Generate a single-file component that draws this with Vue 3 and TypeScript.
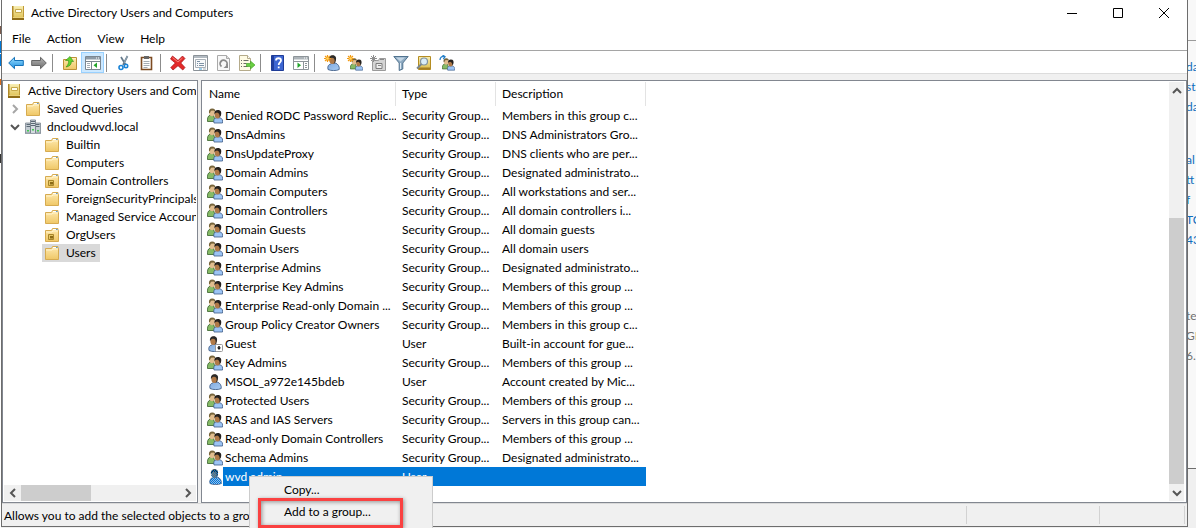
<script setup lang="ts">
import { ref } from 'vue'

interface Tool { id: string; label: string; active?: boolean }
interface TreeNode { label: string; icon: string; depth: number; state?: 'open' | 'closed' }
interface Row { name: string; icon: string; type: string; desc: string }

const menus = ['File', 'Action', 'View', 'Help']

const toolGroups: Tool[][] = [
  [{ id: 'back', label: 'Back' }, { id: 'forward', label: 'Forward' }],
  [{ id: 'up', label: 'Up one level' }, { id: 'tree', label: 'Show/Hide console tree', active: true }],
  [{ id: 'cut', label: 'Cut' }, { id: 'paste', label: 'Paste' }],
  [
    { id: 'delete', label: 'Delete' },
    { id: 'props', label: 'Properties' },
    { id: 'refresh', label: 'Refresh' },
    { id: 'export', label: 'Export list' },
  ],
  [{ id: 'help', label: 'Help' }, { id: 'action', label: 'Show/Hide action pane' }],
  [
    { id: 'newuser', label: 'Create a new user' },
    { id: 'newgroup', label: 'Create a new group' },
    { id: 'newou', label: 'Create a new organizational unit' },
    { id: 'filter', label: 'Set filtering options' },
    { id: 'find', label: 'Find objects' },
    { id: 'addgroup', label: 'Add to a group' },
  ],
]

const tree: TreeNode[] = [
  { label: 'Active Directory Users and Computers', icon: 'book', depth: 0 },
  { label: 'Saved Queries', icon: 'folder', depth: 1, state: 'closed' },
  { label: 'dncloudwvd.local', icon: 'domain', depth: 1, state: 'open' },
  { label: 'Builtin', icon: 'folder', depth: 2 },
  { label: 'Computers', icon: 'folder', depth: 2 },
  { label: 'Domain Controllers', icon: 'ou', depth: 2 },
  { label: 'ForeignSecurityPrincipals', icon: 'folder', depth: 2 },
  { label: 'Managed Service Accounts', icon: 'folder', depth: 2 },
  { label: 'OrgUsers', icon: 'ou', depth: 2 },
  { label: 'Users', icon: 'folder', depth: 2 },
]

const group = (name: string, desc: string): Row => ({ name, icon: 'group', type: 'Security Group...', desc })

const rows: Row[] = [
  group('Denied RODC Password Replic...', 'Members in this group c...'),
  group('DnsAdmins', 'DNS Administrators Gro...'),
  group('DnsUpdateProxy', 'DNS clients who are per...'),
  group('Domain Admins', 'Designated administrato...'),
  group('Domain Computers', 'All workstations and ser...'),
  group('Domain Controllers', 'All domain controllers i...'),
  group('Domain Guests', 'All domain guests'),
  group('Domain Users', 'All domain users'),
  group('Enterprise Admins', 'Designated administrato...'),
  group('Enterprise Key Admins', 'Members of this group ...'),
  group('Enterprise Read-only Domain ...', 'Members of this group ...'),
  group('Group Policy Creator Owners', 'Members in this group c...'),
  { name: 'Guest', icon: 'disabled', type: 'User', desc: 'Built-in account for gue...' },
  group('Key Admins', 'Members of this group ...'),
  { name: 'MSOL_a972e145bdeb', icon: 'user', type: 'User', desc: 'Account created by Mic...' },
  group('Protected Users', 'Members of this group ...'),
  group('RAS and IAS Servers', 'Servers in this group can...'),
  group('Read-only Domain Controllers', 'Members of this group ...'),
  group('Schema Admins', 'Designated administrato...'),
  { name: 'wvd admin', icon: 'picked', type: 'User', desc: '' },
]

const currentNode = ref('Users')
const selected = ref('wvd admin')
</script>

<template>
  <svg class="defs" aria-hidden="true">
    <defs>
      <linearGradient id="gFolder" x1="0" y1="0" x2="0" y2="1"><stop offset="0" stop-color="#ffeab0" /><stop offset="1" stop-color="#efc766" /></linearGradient>
      <linearGradient id="gBook" x1="0" y1="0" x2="0" y2="1"><stop offset="0" stop-color="#f8eeb4" /><stop offset="1" stop-color="#dcbc48" /></linearGradient>
      <linearGradient id="gBlue" x1="0" y1="0" x2="0" y2="1"><stop offset="0" stop-color="#9fe0ff" /><stop offset="1" stop-color="#1a8ee0" /></linearGradient>
      <linearGradient id="gGrey" x1="0" y1="0" x2="0" y2="1"><stop offset="0" stop-color="#b5b5b5" /><stop offset="1" stop-color="#6e6e6e" /></linearGradient>
      <linearGradient id="gShirt" x1="0" y1="0" x2="1" y2="1"><stop offset="0" stop-color="#7fa8dc" /><stop offset="1" stop-color="#a9cdf5" /></linearGradient>
      <pattern id="dither" width="2" height="2" patternUnits="userSpaceOnUse"><path d="M0 0h1v1H0zM1 1h1v1H1z" fill="#0078d7" /></pattern>
      <symbol id="book" viewBox="0 0 16 16">
        <path d="M2 1h12v14H2z" fill="url(#gBook)" /><path d="M2 1h1.500v14H2z" fill="#b0892a" /><path d="M13 1h1v14h-1z" fill="#c09a38" />
        <path d="M2 13h12v2H2z" fill="#8f6c17" /><path d="M3 12.500h11" stroke="#e8d07a" />
        <path d="M5.500 4.500h6v3h-6z" fill="#fffef2" stroke="#c6a84a" />
      </symbol>
      <symbol id="folder" viewBox="0 0 16 16">
        <path d="M1.500 3.500h6l1-2h5.500v2h.5v11h-13z" fill="url(#gFolder)" stroke="#d6ab50" />
        <path d="M9 2.500h3.500" stroke="#fff" /><path d="M12 2.500h1.500" stroke="#5b9bd5" /><path d="M2 5h6l1-1h5" stroke="#fff3cc" fill="none" />
      </symbol>
      <symbol id="ou" viewBox="0 0 16 16">
        <use href="#folder" /><path d="M4.500 7.500h5v5h-5z" fill="#e6c765" stroke="#a8852a" /><path d="M6 9h3v2.500H6z" fill="#8c6a16" />
      </symbol>
      <symbol id="domain" viewBox="0 0 16 16">
        <path d="M.5 4h5v10h-5zM10.500 4h5v10h-5z" fill="#c4ccd3" stroke="#7c8790" stroke-width=".8" />
        <path d="M5.500 1h5v13.500h-5z" fill="#d4dbe0" stroke="#6b7680" stroke-width=".8" />
        <path d="M1.500 5.500H5M1.500 7.500H5M6 2.500h4M6 4.500h4M6 6.500h4M11 5.500h3.500M11 7.500h3.500" stroke="#5c6a76" />
        <path d="M2 11h2v1.500H2zM7 10h2v1.500H7zM12 11h2v1.500h-2z" fill="#3fc94f" /><path d="M0 14.500h16" stroke="#98a2aa" />
      </symbol>
      <symbol id="user" viewBox="0 0 16 16">
        <path d="M3 14.500c-.7-3 .2-5 3-5.600l1-1h3c3 .8 4.700 3.500 4.200 6.600-2.500 1.400-8.500 1.500-11.200 0z" fill="url(#gShirt)" stroke="#35537d" stroke-width=".8" />
        <ellipse cx="7.400" cy="4.800" rx="3.100" ry="4.200" fill="#b07a48" />
        <path d="M8.500 8.800C10 7 10 5 9 3.400 7.500 2.400 5.800 2.600 4.600 4.200L3.900 5C3.600 2 5 .3 7.600.3c3.100 0 4 2.600 3.300 5-.4 2-1.200 3.300-2.400 3.500z" fill="#2b2a29" />
      </symbol>
      <symbol id="disabled" viewBox="0 0 16 16">
        <use href="#user" x="-1" /><rect x="8.500" y="8.500" width="7" height="7" rx="1" fill="#fff" stroke="#999" /><path d="M12 10v2" stroke="#111" stroke-width="1.500" /><path d="M10 11.500h4L12 14z" fill="#111" />
      </symbol>
      <symbol id="picked" viewBox="0 0 16 16">
        <use href="#user" /><path d="M3 15c-.7-3.200 0-5.500 2-6.500C4 6.500 3.300 4 4.200 2.500 6-.2 9-.2 10.700 2.300c.8 2.300.2 4.400-1 6.100 3 .8 5.200 3 4.700 6.600z" fill="url(#dither)" />
      </symbol>
      <symbol id="group" viewBox="0 0 16 16">
        <path d="M.5 13.500C.2 10 1 7.900 3 7.200h3.500l2 6.300z" fill="#86bb66" stroke="#35602a" stroke-width=".8" />
        <ellipse cx="5" cy="4.600" rx="2.900" ry="3.600" fill="#e0bd8e" />
        <path d="M2 5C1.500 1.900 2.900.4 5.200.4c2.400 0 3.500 1.300 3 3.300L6.500 2.600 4 2.700 2.900 5z" fill="#77653c" />
        <path d="M7 15c-.8-3 .2-4.600 2.100-5.200H13c2.200.6 3 2.500 2.500 5.200z" fill="#9cc4f4" stroke="#3c5a86" stroke-width=".8" />
        <ellipse cx="10.500" cy="6.800" rx="2.900" ry="3.700" fill="#b07a48" />
        <path d="M7.500 6.500C7 3.300 8.500 1.900 10.900 1.900c3.100 0 4 2.400 3 5.500l-1.300 2C13 6.500 11.800 5 10 4.600L8.200 5.300z" fill="#25211e" />
      </symbol>
      <symbol id="back" viewBox="0 0 16 16"><path d="M.7 8L6.500 2.300v3.200h8.800v5H6.500v3.200z" fill="url(#gBlue)" stroke="#1672b8" stroke-linejoin="round" /></symbol>
      <symbol id="forward" viewBox="0 0 16 16"><path d="M15.300 8L9.500 2.300v3.200H.7v5h8.800v3.200z" fill="url(#gGrey)" stroke="#666" stroke-linejoin="round" /></symbol>
      <symbol id="up" viewBox="0 0 16 16">
        <path d="M1.500 4.500h6l1-2h6v12h-13z" fill="url(#gFolder)" stroke="#bd9138" /><path d="M9 3.500h5" stroke="#fff1bd" />
        <path d="M4 12c3.500-.5 5.500-2.500 5.300-5.500h2.200L8 1.500 3.500 5.500H6.500C7 8 6 10 4 12z" fill="#63d52d" stroke="#318b15" stroke-width=".6" />
      </symbol>
      <symbol id="tree" viewBox="0 0 16 16">
        <path d="M.5 1.500h15v13H.5z" fill="#fff" stroke="#7b8791" /><path d="M1 2h14v2.500H1z" fill="#8d9aa6" /><path d="M1 6.500h14M6.500 7v7" stroke="#7b8791" /><path d="M2 8.500h3M2 10.500h3M2 12.500h3" stroke="#a5adb5" /><path d="M12 7.500v5.500L8.500 10.200z" fill="#21a52a" /><path d="M11 3h1M13 3h1" stroke="#fff" />
      </symbol>
      <symbol id="action" viewBox="0 0 16 16">
        <path d="M.5 1.500h15v13H.5z" fill="#fff" stroke="#8d9499" /><path d="M1 2h14v2.500H1z" fill="#adb4b9" /><path d="M1 6.500h14M10.500 7v7" stroke="#8d9499" /><path d="M12 8.500h2M12 10.500h2M12 12.500h2" stroke="#8d9499" /><path d="M4.500 7.500v5.500L8 10.200z" fill="#21a52a" /><path d="M11 3h1M13 3h1" stroke="#fff" />
      </symbol>
      <symbol id="cut" viewBox="0 0 16 16">
        <path d="M11.500 1L7 10M5 2l4.500 7.500" stroke="#64798a" stroke-width="1.700" /><path d="M11.500 1L8 8" stroke="#a8bac8" stroke-width=".7" />
        <circle cx="5" cy="12.500" r="2" fill="none" stroke="#1a83d6" stroke-width="1.600" /><circle cx="10" cy="11" r="1.700" fill="none" stroke="#1a83d6" stroke-width="1.600" />
      </symbol>
      <symbol id="paste" viewBox="0 0 16 16"><path d="M2.500 2.500h10v12h-10z" fill="#fff" stroke="#7d4b22" stroke-width="1.600" /><path d="M5 1h5v3H5z" fill="#666" /><path d="M4.500 6.500h6M4.500 8.500h6M4.500 10.500h6M4.500 12.500h4" stroke="#a5adb5" /></symbol>
      <symbol id="delete" viewBox="0 0 16 16"><path d="M2.500 1L8 5.500 12.500 1 15 3.500 10.800 8 15 12.500 12.800 15 8 10.700 3 15 .8 12.500 5.300 8 .5 4z" fill="#e32a2a" stroke="#a61016" stroke-width=".7" /><path d="M2.500 2.500L8 7l4.500-4" stroke="#f68378" fill="none" /></symbol>
      <symbol id="props" viewBox="0 0 16 16"><path d="M.5.500h14v15H.5z" fill="#fff" stroke="#8b9298" /><path d="M1 2h13" stroke="#b3bbc2" stroke-width="2" /><path d="M2.500 4.500h10v8h-10z" fill="#f7f9fb" stroke="#a9b1b8" /><path d="M4 6.500h3M4 8.500h1M6 8.500h5M4 10.500h1M6 10.500h5" stroke="#7d92a5" /><path d="M6 14h3" stroke="#3c9ed8" /><path d="M10 14h3" stroke="#a9b1b8" /></symbol>
      <symbol id="refresh" viewBox="0 0 16 16"><path d="M1.500.5h9l3 3v12h-12z" fill="#f8f8f8" stroke="#a9a9a9" /><path d="M10.500.5v3h3" fill="#ddd" stroke="#a9a9a9" /><path d="M5.500 11.500a3.500 3.500 0 1 1 5-.8" fill="none" stroke="#8b8b8b" stroke-width="1.800" /><path d="M12 9v4H7.500z" fill="#8b8b8b" /></symbol>
      <symbol id="export" viewBox="0 0 16 16"><path d="M.5.500h8l3 3v12H.5z" fill="#fffbe4" stroke="#b5ab8b" /><path d="M8.500.5v3h3" fill="#fff" stroke="#b5ab8b" /><path d="M2 5.500h1M4.500 5.500h5M2 8.500h1M4.500 8.500h3M2 11.500h1M4.500 11.500h4" stroke="#6d6d65" /><path d="M7.500 8.500h4V6L16 10l-4.500 4v-2.500h-4z" fill="#69cf42" stroke="#3d9c20" stroke-width=".6" /></symbol>
      <symbol id="help" viewBox="0 0 16 16"><path d="M1.500.5h12v15h-12z" fill="#3d66d2" stroke="#1f3c97" /><path d="M2 1h2v14H2z" fill="#203e9e" /><path d="M6 5.500c0-3 5-3 5 0 0 2-2.300 2-2.300 4.500" fill="none" stroke="#fff" stroke-width="1.800" /><path d="M7.800 11.500h1.800v1.800H7.800z" fill="#fff" /></symbol>
      <symbol id="star" viewBox="0 0 8 8"><path d="M4 0v8M0 4h8M1.200 1.200l5.600 5.600M6.800 1.200L1.200 6.800" stroke="#f39a13" stroke-width="1.400" /><circle cx="4" cy="4" r="1.500" fill="#ffd45e" /></symbol>
      <symbol id="newuser" viewBox="0 0 16 16"><use href="#user" x="1" /><use href="#star" x="0" y="0" width="7" height="7" /></symbol>
      <symbol id="newgroup" viewBox="0 0 16 16"><use href="#group" x="3" y="3" width="13" height="13" /><use href="#star" width="7" height="7" /></symbol>
      <symbol id="newou" viewBox="0 0 16 16"><path d="M2.500 5.500h6l1-2h6v12h-13z" fill="#d4d4d4" stroke="#9a9a9a" /><path d="M6 8.500h6v5H6z" fill="#eee" stroke="#7d7d7d" /><path d="M8 10.500h3M10 4.500h4" stroke="#888" /><path d="M3.500 0v7M0 3.500h7M1 1l5 5M6 1L1 6" stroke="#8e8e8e" /></symbol>
      <symbol id="filter" viewBox="0 0 16 16"><path d="M.8 1.500h14.400L9.800 8v6l-3.600 1.500V8z" fill="#8fabc2" stroke="#51738f" /><path d="M3 2.500h9L7.500 6.500z" fill="#c3d6e5" /><path d="M7.500 8v6" stroke="#e1edf6" /></symbol>
      <symbol id="find" viewBox="0 0 16 16"><path d="M2.500 1.500h12v13h-12z" fill="url(#gBook)" stroke="#b58d22" /><path d="M3 12.500h11v2H3z" fill="#a47e22" /><circle cx="8" cy="6.500" r="3.500" fill="#d9edf9" stroke="#82939e" stroke-width="1.200" /><path d="M5.500 9L1 13.500" stroke="#788792" stroke-width="1.800" /></symbol>
      <symbol id="addgroup" viewBox="0 0 16 16"><use href="#group" x="3" y="3" width="13" height="13" /><path d="M1 5c0-3 2-4 4.500-3.500M3.500 0L6 1.700 4.300 4" fill="none" stroke="#247fc9" stroke-width="1.300" /></symbol>
    </defs>
  </svg>

  <div class="desktop">
    <div class="behind-left"><i class="brown"></i><i class="blue"></i><i class="blue"></i><i class="orange"></i><i class="mark"></i></div>

    <main class="window">
      <header class="titlebar">
        <svg class="icon"><use href="#book" /></svg>
        <h1>Active Directory Users and Computers</h1>
        <div class="controls">
          <button aria-label="Minimize"><svg viewBox="0 0 12 12"><path d="M1 6.500h10" /></svg></button>
          <button aria-label="Maximize"><svg viewBox="0 0 12 12"><path d="M1.500 1.500h9v9h-9z" /></svg></button>
          <button aria-label="Close"><svg viewBox="0 0 12 12"><path d="M1 1l10 10M11 1L1 11" /></svg></button>
        </div>
      </header>

      <nav class="menubar"><button v-for="m in menus" :key="m">{{ m }}</button></nav>

      <div class="toolbar" role="toolbar" aria-label="Standard">
        <div v-for="(g, i) in toolGroups" :key="i" class="tools">
          <button v-for="t in g" :key="t.id" :class="{ active: t.active }" :aria-label="t.label">
            <svg class="icon"><use :href="'#' + t.id" /></svg>
          </button>
        </div>
      </div>

      <div class="panes">
        <section class="pane tree-pane">
          <ul class="tree">
            <li v-for="n in tree" :key="n.label" :class="'depth' + n.depth">
              <button v-if="n.depth === 1" class="expander" :class="n.state" :aria-label="n.state === 'open' ? 'Collapse' : 'Expand'">
                <svg viewBox="0 0 10 10"><path :d="n.state === 'open' ? 'M1 3l4 4 4-4' : 'M3 1l4 4-4 4'" /></svg>
              </button>
              <button class="node" :class="{ current: n.label === currentNode }" @click="currentNode = n.label">
                <svg class="icon"><use :href="'#' + n.icon" /></svg><span>{{ n.label }}</span>
              </button>
            </li>
          </ul>
          <div class="hscroll">
            <button aria-label="Scroll left"><svg viewBox="0 0 10 10"><path d="M7 1L3 5l4 4" /></svg></button>
            <div class="track"><div class="thumb"></div></div>
            <button aria-label="Scroll right"><svg viewBox="0 0 10 10"><path d="M3 1l4 4-4 4" /></svg></button>
          </div>
        </section>

        <section class="pane list-pane">
          <div class="list">
            <table>
              <thead><tr><th class="c-name">Name</th><th class="c-type">Type</th><th class="c-desc">Description</th></tr></thead>
              <tbody>
                <tr v-for="r in rows" :key="r.name" :class="{ selected: r.name === selected }" @click="selected = r.name">
                  <td><div class="entry"><svg class="icon"><use :href="'#' + r.icon" /></svg><span>{{ r.name }}</span></div></td>
                  <td>{{ r.type }}</td>
                  <td>{{ r.desc }}</td>
                </tr>
              </tbody>
            </table>
          </div>
          <div class="vscroll">
            <button aria-label="Scroll up"><svg viewBox="0 0 10 10"><path d="M1 7l4-4 4 4" /></svg></button>
            <div class="track"><div class="spacer"></div><div class="thumb"></div></div>
            <button aria-label="Scroll down"><svg viewBox="0 0 10 10"><path d="M1 3l4 4 4-4" /></svg></button>
          </div>
        </section>
      </div>

      <footer class="statusbar">
        <span class="message">Allows you to add the selected objects to a group</span>
        <span class="cell wide"></span><span class="cell"></span>
      </footer>
    </main>

    <aside class="behind-right">
      <div class="page">
        <p class="links"><span>da</span><span>sta</span><span>da</span></p>
        <p class="links second"><span>al</span><span>tt</span><span>f</span><span>TC</span><span>43</span></p>
        <p class="notes"><span>te</span><span>GB</span><span>6.</span></p>
      </div>
    </aside>

    <div class="context" role="menu">
      <button role="menuitem">Copy...</button>
      <button role="menuitem">Add to a group...</button>
      <div class="callout"></div>
    </div>
  </div>
</template>

<style>
html, body { margin: 0; background: #f0f0f0; }
</style>

<style scoped>
* { box-sizing: border-box; }
.defs { position: absolute; width: 0; height: 0; }
.desktop { position: relative; display: flex; height: 100vh; overflow: hidden; font: 12px/18px Lato, "Open Sans", sans-serif; color: #000; }
button { font: inherit; color: inherit; border: 0; padding: 0; margin: 0; background: none; }
.icon { width: 16px; height: 16px; flex: none; display: block; }

.behind-left { width: 1px; flex: none; background: #fff; }
.behind-left i { display: block; }
.brown { height: 8px; margin-top: 26px; background: #7b5b4c; }
.blue { height: 12px; margin-top: 7px; background: #0078d7; }
.blue + .blue { margin-top: 1px; }
.orange { height: 6px; margin-top: 13px; background: #d86a1c; }
.mark { height: 9px; margin-top: 69px; background: #333; }

.window { flex: 1; min-width: 0; display: flex; flex-direction: column; align-self: flex-start; background: #f0f0f0; border: solid #6d6d6d; border-width: 0 1px 1px; }
.titlebar { display: flex; align-items: center; height: 26px; padding-left: 8px; background: #fff; }
.titlebar h1 { flex: 1; margin: 0 0 0 5px; font-size: 12px; font-weight: 400; white-space: nowrap; }
.controls { display: flex; }
.controls button { width: 46px; height: 26px; display: grid; place-items: center; }
.controls svg { width: 12px; height: 12px; fill: none; stroke: #000; }
.menubar { display: flex; gap: 16px; height: 24px; padding: 4px 10px 2px; background: #fff; }
.toolbar { display: flex; height: 24px; padding: 1px 0 0 2px; background: #fff; border-top: 1px solid #a5a5a5; border-bottom: 1px solid #dcdcdc; }
.tools { display: flex; align-items: center; }
.tools + .tools::before { content: ""; width: 1px; height: 18px; margin: 0 5px 0 2px; background: #8c8c8c; }
.tools button { width: 23px; height: 21px; display: grid; place-items: center; }
.tools button.active { background: #cce8ff; border: 1px solid #99d1ff; }

.panes { display: flex; gap: 3px; padding-top: 6px; height: 429px; }
.pane { background: #fff; border: 1px solid #828790; }
.tree-pane { width: 196px; flex: none; display: flex; flex-direction: column; padding: 1px; }
.tree { flex: 1; list-style: none; margin: 0; padding: 0; overflow: hidden; }
.tree li { display: flex; height: 18px; align-items: center; }
.depth1 { padding-left: 3px; }
.depth2 { padding-left: 38px; }
.expander { width: 16px; height: 16px; display: grid; place-items: center; flex: none; }
.expander svg, .hscroll svg, .vscroll svg { width: 10px; height: 10px; fill: none; stroke: #555; stroke-width: 2; }
.expander.closed svg { stroke: #a6a6a6; }
.node { display: flex; align-items: center; height: 18px; gap: 6px; padding: 0 4px 0 2px; white-space: nowrap; }
.node.current { background: #d9d9d9; }
.hscroll { display: flex; height: 16px; background: #f0f0f0; }
.hscroll button { width: 17px; display: grid; place-items: center; }
.hscroll .track { flex: 1; }
.hscroll .thumb { width: 44%; height: 100%; background: #cdcdcd; }

.list-pane { flex: 1; min-width: 0; display: flex; padding: 1px 1px 1px 0; }
.list { flex: 1; overflow: hidden; }
table { width: 444px; table-layout: fixed; border-collapse: separate; border-spacing: 0; line-height: 19px; }
th { height: 24px; padding: 0 6px 2px; font-weight: 400; text-align: left; border-right: 1px solid #e3e3e3; }
.c-name { width: 194px; padding-left: 7px; }
.c-type { width: 100px; }
.c-desc { width: 150px; }
td { height: 19px; padding: 0 0 0 6px; white-space: nowrap; overflow: hidden; }
td:first-child { padding-left: 5px; }
.entry { display: flex; align-items: center; }
.entry span { flex: 1; height: 19px; padding-left: 2px; }
.selected td:not(:first-child), .selected .entry span { background: #0078d7; color: #fff; }
.vscroll { width: 16px; padding-right: 1px; display: flex; flex-direction: column; background: #f0f0f0; background-clip: content-box; }
.vscroll button { height: 17px; display: grid; place-items: center; }
.vscroll .track { flex: 1; display: flex; flex-direction: column; }
.vscroll .spacer { flex: 31; }
.vscroll .thumb { flex: 69; background: #cdcdcd; }

.statusbar { display: flex; height: 23px; padding: 2px 2px 2px 0; border-top: 1px solid #d9d9d9; }
.message { flex: 1; padding: 1px 2px; white-space: nowrap; overflow: hidden; border-right: 1px solid #d2d2d2; }
.cell { width: 85px; border-right: 1px solid #d2d2d2; }
.cell.wide { width: 133px; }

.behind-right { width: 8px; flex: none; overflow: hidden; background: #f0f0f0; }
.page { height: 469px; padding-top: 40px; background: #f8f8f8; border-bottom: 1px solid #6d6d6d; }
.page p { margin: 0; font-size: 12px; line-height: 20px; text-indent: -2px; white-space: nowrap; color: #0f6cbd; }
.page .links:first-child { border-top: 1px solid #9a9a9a; padding-top: 16px; }
.page .second { margin-top: 33px; }
.page .notes { margin-top: 56px; color: #707070; }
.page span { display: block; }

.context { position: absolute; left: 249px; top: 476px; bottom: 0; width: 184px; padding: 2px; background: #f0f0f0; border: solid #ccc; border-width: 1px 1px 0; }
.context button { display: block; width: 100%; height: 22px; padding-left: 32px; text-align: left; }
.callout { position: absolute; left: 8px; top: 21px; width: 145px; height: 30px; border: 3px solid #fa4141; box-shadow: 1px 1px 4px #0006, inset 1px 1px 4px #0006; pointer-events: none; }
</style>
